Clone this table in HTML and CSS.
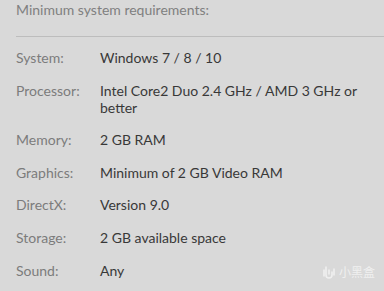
FILE: index.html
```html
<!DOCTYPE html>
<html>
<head>
    <title>System Requirements</title>
    <link rel="stylesheet" href="styles.css">
</head>
<body>
    <div class="requirements">
        <h4>Minimum system requirements:</h4>
        <ul class="spec-list">
            <li><span class="spec-label">System:</span><span class="spec-value">Windows 7 / 8 / 10</span></li>
            <li><span class="spec-label">Processor:</span><span class="spec-value">Intel Core2 Duo 2.4 GHz / AMD 3 GHz or better</span></li>
            <li><span class="spec-label">Memory:</span><span class="spec-value">2 GB RAM</span></li>
            <li><span class="spec-label">Graphics:</span><span class="spec-value">Minimum of 2 GB Video RAM</span></li>
            <li><span class="spec-label">DirectX:</span><span class="spec-value">Version 9.0</span></li>
            <li><span class="spec-label">Storage:</span><span class="spec-value">2 GB available space</span></li>
            <li><span class="spec-label">Sound:</span><span class="spec-value">Any</span></li>
        </ul>
    </div>
    <!-- Watermark -->
    <div class="watermark">
        <svg width="15" height="16" viewBox="0 0 15 16">
            <path d="M4 3 L4 11 Q4 14 7 14 M7 14 Q10 14 10 11 L10 8 M7 6 L7 10 M2 6 L2 12 M12 5 L12 11" stroke="#fff" stroke-width="1.6" fill="none" stroke-linecap="round"/>
        </svg>
        <span>小黑盒</span>
    </div>
</body>
</html>
```

FILE: styles.css
```css
body {
    margin: 0;
    background-color: #d9d9d9;
    font-family: Lato, "Noto Sans CJK SC", sans-serif;
    font-size: 14px;
    overflow: hidden;
}

.requirements {
    padding-left: 16px;
}

.requirements h4 {
    margin: 0;
    padding: 1px 0 18px;
    font-size: 14px;
    font-weight: normal;
    line-height: 17px;
    color: #808080;
    border-bottom: 1px solid #bdbdbd;
}

.spec-list {
    list-style: none;
    margin: 0;
    padding: 12px 0 0;
}

.spec-list li {
    display: flex;
    line-height: 17px;
    padding-bottom: 15.6px;
}

.spec-label {
    width: 84px;
    flex-shrink: 0;
    color: #7c7c7c;
}

.spec-value {
    color: #383838;
    padding-right: 20px;
}

/* Watermark */
.watermark {
    position: absolute;
    right: 9px;
    bottom: 11px;
    display: flex;
    align-items: center;
    gap: 2px;
    opacity: 0.6;
    color: #fff;
    font-size: 12px;
}
```
